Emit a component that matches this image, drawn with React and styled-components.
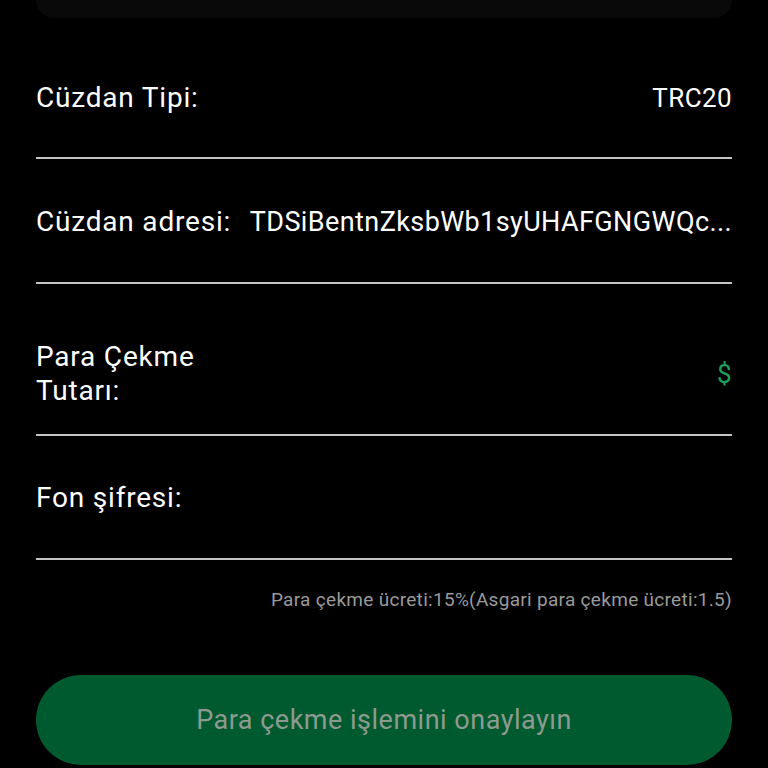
import React from 'react';
import styled, { createGlobalStyle } from 'styled-components';

const GlobalStyle = createGlobalStyle`
  html, body {
    margin: 0;
    padding: 0;
    background: #000;
  }
  body {
    font-family: Roboto, "Noto Sans", "Liberation Sans", sans-serif;
    color: #fff;
  }
`;

const Page = styled.div`
  width: 768px;
  height: 768px;
  overflow: hidden;
  background: #000;
  padding: 0 36px;
  box-sizing: border-box;
`;

const TopCard = styled.div`
  height: 18px;
  background: #0a090a;
  border-radius: 0 0 18px 18px;
`;

const Form = styled.div`
  display: flex;
  flex-direction: column;
`;

const Row = styled.div`
  display: flex;
  align-items: center;
  gap: 15px;
  padding: ${({ $top }) => $top}px 0 ${({ $bottom }) => $bottom}px;
  border-bottom: 2px solid #c4c4c4;
`;

const Label = styled.div`
  font-size: 28px;
  line-height: 34px;
  letter-spacing: 0.8px;
  color: #fff;
  white-space: ${({ $wrap }) => ($wrap ? 'normal' : 'nowrap')};
  width: ${({ $width }) => ($width ? `${$width}px` : 'auto')};
  flex-shrink: 0;
`;

const Value = styled.div`
  flex: 1;
  min-width: 0;
  font-size: ${({ $size }) => $size || 26}px;
  line-height: 34px;
  letter-spacing: 0.4px;
  text-align: right;
  white-space: nowrap;
  color: ${({ $accent }) => ($accent ? '#1fa15a' : '#fff')};
`;

const Fee = styled.div`
  margin-top: 28px;
  font-size: 19px;
  line-height: 24px;
  letter-spacing: 0.3px;
  color: #9a9a9a;
  text-align: right;
`;

const ConfirmButton = styled.button`
  margin-top: 63px;
  height: 90px;
  width: 100%;
  border: none;
  border-radius: 45px;
  background: #005a2f;
  color: #8d9a8f;
  font-family: Roboto, "Noto Sans", sans-serif;
  font-size: 27px;
  letter-spacing: 0.5px;
  cursor: pointer;
`;

const address = 'TDSiBentnZksbWb1syUHAFGNGWQcE8mzvx';
const shortAddress = `${address.slice(0, 28)}...`;

export default function App() {
  return (
    <>
      <GlobalStyle />
      <Page>
        <TopCard />
        <Form>
          <Row $top={63} $bottom={42}>
            <Label>Cüzdan Tipi:</Label>
            <Value>TRC20</Value>
          </Row>
          <Row $top={46} $bottom={43}>
            <Label>Cüzdan adresi:</Label>
            <Value $size={27}>{shortAddress}</Value>
          </Row>
          <Row $top={56} $bottom={26}>
            <Label $wrap $width={172}>Para Çekme Tutarı:</Label>
            <Value $accent>$</Value>
          </Row>
          <Row $top={45} $bottom={43}>
            <Label>Fon şifresi:</Label>
            <Value />
          </Row>
        </Form>
        <Fee>Para çekme ücreti:15%(Asgari para çekme ücreti:1.5)</Fee>
        <ConfirmButton>Para çekme işlemini onaylayın</ConfirmButton>
      </Page>
    </>
  );
}
